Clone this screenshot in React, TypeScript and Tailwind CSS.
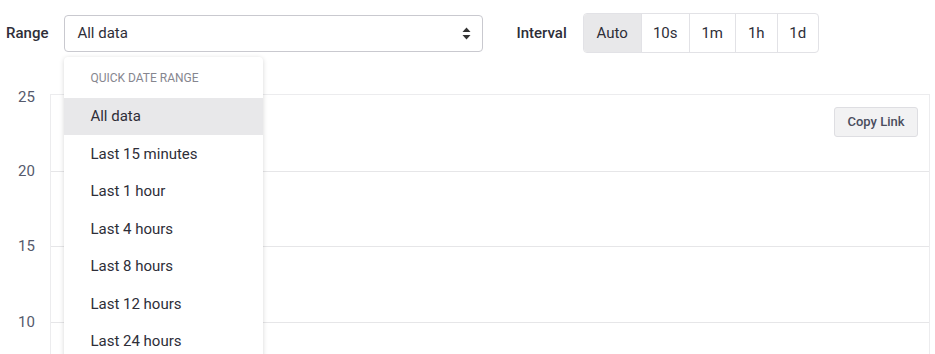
import React from 'react';

const ranges = [
  'All data',
  'Last 15 minutes',
  'Last 1 hour',
  'Last 4 hours',
  'Last 8 hours',
  'Last 12 hours',
  'Last 24 hours',
];

const intervals = [
  { label: 'Auto', w: 'w-[57px]' },
  { label: '10s', w: 'w-[48px]' },
  { label: '1m', w: 'w-[46px]' },
  { label: '1h', w: 'w-[42px]' },
  { label: '1d', w: 'w-[41px]' },
];

const SortArrows = () => (
  <svg width="9" height="13" viewBox="0 0 9 13" className="text-[#333]">
    <path d="M4.5 0.5 L8.5 5 H0.5 Z" fill="currentColor" />
    <path d="M4.5 12.5 L8.5 8 H0.5 Z" fill="currentColor" />
  </svg>
);

export default function App() {
  return (
    <div
      className="w-[935px] h-[354px] overflow-hidden bg-white text-[#2e2e38] relative"
      style={{ fontFamily: 'Roboto, "Liberation Sans", sans-serif' }}
    >
      {/* toolbar */}
      <div className="flex items-center mt-[13px] h-[40px]">
        <span className="ml-[6px] text-[15px] font-medium">Range</span>
        <div className="relative ml-[16px]">
          <div className="w-[419px] h-[37px] border border-[#c9c9cf] rounded-[4px] flex items-center justify-between pl-[12px] pr-[11px] text-[15px]">
            <span>All data</span>
            <SortArrows />
          </div>
          <div className="absolute left-0 top-[42px] w-[199px] bg-white rounded-[4px] shadow-[0_1px_5px_rgba(0,0,0,0.16)] z-10">
            <div className="h-[41px] flex items-center pl-[26px] pt-[1px] text-[12px] text-[#86868f] uppercase">
              Quick date range
            </div>
            {ranges.map((r, i) => (
              <div
                key={r}
                className={`h-[37.5px] flex items-center pl-[26px] text-[15px] ${i === 0 ? 'bg-[#e8e8ea]' : ''}`}
              >
                {r}
              </div>
            ))}
          </div>
        </div>
        <span className="ml-[33px] text-[15px] font-medium">Interval</span>
        <div className="ml-[16px] flex h-[40px] border border-[#e2e2e6] rounded-[4px] overflow-hidden">
          {intervals.map((v, i) => (
            <div
              key={v.label}
              className={`${v.w} flex items-center justify-center text-[15px] ${i === 0 ? 'bg-[#e8e8ea]' : 'border-l border-[#e2e2e6]'}`}
            >
              {v.label}
            </div>
          ))}
        </div>
      </div>

      {/* chart */}
      <div className="mt-[41px] flex">
        <div className="w-[50px] flex flex-col text-[15px] leading-[18px] text-[#555a6c] pl-[18px]">
          <div className="h-[74px] -mt-[6px]">25</div>
          <div className="h-[75px]">20</div>
          <div className="h-[76px]">15</div>
          <div className="h-[76px]">10</div>
        </div>
        <div className="w-[880px] border-l border-r border-t border-[#ececee] flex flex-col">
          <div className="h-[77px] border-b border-[#e6e6e8] flex justify-end items-start pt-[12px] pr-[11px]">
            <button className="w-[84px] h-[30px] bg-[#f2f2f3] border border-[#dedee2] rounded-[3px] text-[13px] font-medium text-[#4a4d5e]">
              Copy Link
            </button>
          </div>
          <div className="h-[75px] border-b border-[#e6e6e8]" />
          <div className="h-[76px] border-b border-[#e6e6e8]" />
          <div className="h-[76px]" />
        </div>
      </div>
    </div>
  );
}
